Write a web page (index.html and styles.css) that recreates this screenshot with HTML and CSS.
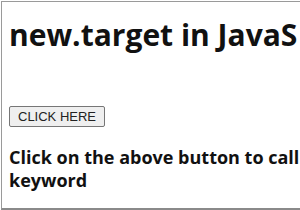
FILE: index.html
```html
<!DOCTYPE html>
<html>
<head>
<meta charset="utf-8">
<link rel="stylesheet" href="styles.css">
</head>
<body>
<div class="frame">
  <h1 class="title">new.target in JavaS</h1>
  <button class="btn">CLICK HERE</button>
  <p class="note">Click on the above button to call keyword</p>
</div>
</body>
</html>
```

FILE: styles.css
```css
html, body {
  margin: 0;
  padding: 0;
  background: #fff;
}
body {
  width: 300px;
  height: 210px;
  overflow: hidden;
}
.frame {
  box-sizing: border-box;
  width: 310px;
  height: 209px;
  margin: 1px 0 0 1px;
  border: 1px solid #9a9a9a;
  border-bottom: 2px solid #8a8a8a;
  padding: 0 0 0 7px;
  overflow: hidden;
  font-family: "Open Sans", "Noto Sans", sans-serif;
  color: #111;
}
.title {
  margin: 16px 0 0 0;
  font-size: 30px;
  line-height: 34px;
  font-weight: 700;
  white-space: nowrap;
}
.btn {
  display: block;
  margin: 54px 0 0 0;
  height: 21px;
  padding: 0 8px;
  font-family: "Liberation Sans", Arial, sans-serif;
  font-size: 13px;
  color: #222;
  background: #efefef;
  border: 1px solid #767676;
  border-radius: 2px;
}
.note {
  margin: 19px 0 0 0;
  width: 296px;
  font-size: 18px;
  line-height: 23px;
  font-weight: 700;
}
```
